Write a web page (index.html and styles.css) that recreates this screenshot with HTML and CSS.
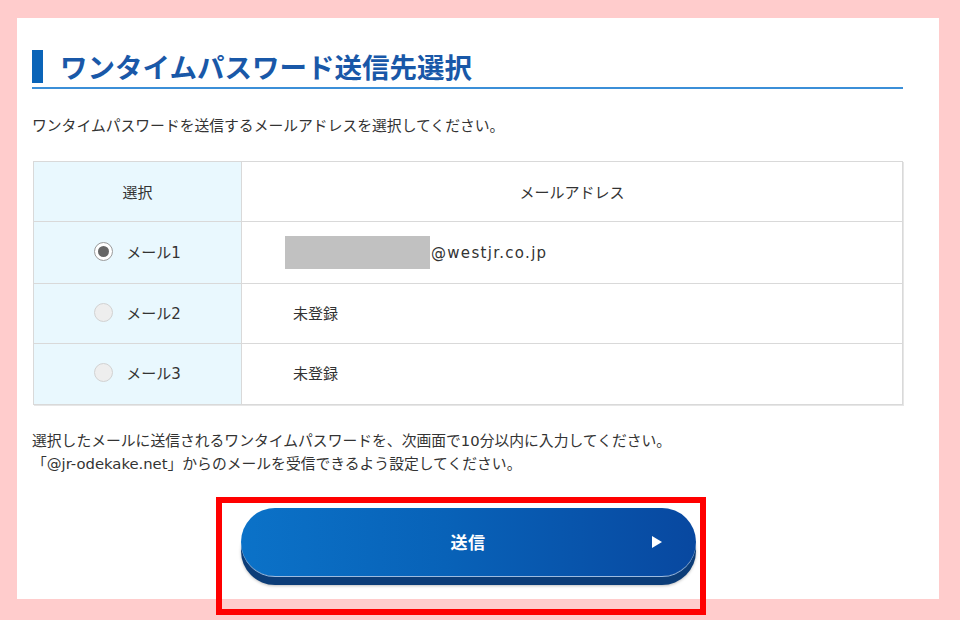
FILE: index.html
```html
<!DOCTYPE html>
<html lang="ja">
<head>
<meta charset="utf-8">
<title>ワンタイムパスワード送信先選択</title>
<link rel="stylesheet" href="styles.css">
</head>
<body>
<div class="panel">
  <h1 class="title"><span class="title-bar"></span>ワンタイムパスワード送信先選択</h1>
  <p class="lead">ワンタイムパスワードを送信するメールアドレスを選択してください。</p>
  <table class="mail-table">
    <tr class="row-head">
      <th class="col-select">選択</th>
      <th class="col-address">メールアドレス</th>
    </tr>
    <tr class="row-1">
      <td class="col-select"><label class="radio-label"><span class="radio checked"></span>メール1</label></td>
      <td class="col-address"><span class="masked"></span><span class="domain">@westjr.co.jp</span></td>
    </tr>
    <tr class="row-2">
      <td class="col-select"><label class="radio-label"><span class="radio"></span>メール2</label></td>
      <td class="col-address"><span class="unreg">未登録</span></td>
    </tr>
    <tr class="row-3">
      <td class="col-select"><label class="radio-label"><span class="radio"></span>メール3</label></td>
      <td class="col-address"><span class="unreg">未登録</span></td>
    </tr>
  </table>
  <p class="notes">選択したメールに送信されるワンタイムパスワードを、次画面で10分以内に入力してください。<br>「@jr-odekake.net」からのメールを受信できるよう設定してください。</p>
  <div class="btn-row">
    <button class="send-btn"><span class="send-label">送信</span><span class="send-arrow"></span></button>
  </div>
</div>
<div class="highlight"></div>
</body>
</html>
```

FILE: styles.css
```css
html, body {
  margin: 0;
  padding: 0;
}
body {
  background: #ffcccc;
  padding: 18px 21px 21px 17px;
  width: 960px;
  height: 620px;
  box-sizing: border-box;
  font-family: "DejaVu Sans", "Noto Sans CJK JP", sans-serif;
  color: #333;
  position: relative;
  overflow: hidden;
}
.panel {
  background: #fff;
  width: 922px;
  height: 581px;
  box-sizing: border-box;
  padding: 31px 36px 0 15px;
}
.title {
  margin: 0;
  display: flex;
  align-items: center;
  gap: 17px;
  height: 34px;
  padding-bottom: 4px;
  font-family: "Noto Sans CJK JP", sans-serif;
  font-size: 27.5px;
  line-height: 34px;
  font-weight: bold;
  color: #1958a8;
  border-bottom: 2px solid #3b8fd8;
}
.title-bar {
  width: 11px;
  height: 33px;
  background: #0a64b8;
  flex: none;
}
.lead {
  margin: 24.5px 0 0 0;
  font-size: 14.8px;
  line-height: 23px;
}
.mail-table {
  margin-top: 24.5px;
  width: 870px;
  margin-left: 1px;
  border-collapse: collapse;
  border: 1px solid #d6d6d6;
  box-shadow: 1px 1px 0 #e6e6e6;
  font-size: 15px;
}
.mail-table th, .mail-table td {
  border: 1px solid #d9d9d9;
  padding: 0;
  font-weight: normal;
  color: #333;
}
.row-head th { height: 59px; }
.row-1 td { height: 61px; }
.row-2 td { height: 59px; }
.row-3 td { height: 60px; }
.mail-table .col-select {
  width: 207px;
  background: #e9f8fe;
  text-align: center;
}
.mail-table th.col-address {
  text-align: center;
}
.mail-table td.col-address {
  text-align: left;
  padding-left: 43px;
}
.radio-label {
  display: inline-flex;
  align-items: center;
  gap: 13px;
}
.radio {
  width: 17px;
  height: 17px;
  border-radius: 50%;
  border: 1px solid #d2d2d2;
  background: #eeeeee;
  position: relative;
  flex: none;
}
.radio.checked {
  background: #fff;
  border-color: #9a9a9a;
}
.radio.checked::after {
  content: "";
  position: absolute;
  left: 3px;
  top: 3px;
  width: 11px;
  height: 11px;
  border-radius: 50%;
  background: #666;
}
.masked {
  display: inline-block;
  width: 145px;
  height: 33px;
  background: #c1c1c1;
  vertical-align: middle;
}
.domain {
  vertical-align: middle;
  margin-left: 1px;
  letter-spacing: 1.3px;
}
.unreg {
  display: inline-block;
  padding-left: 8px;
  margin-top: -3px;
  vertical-align: middle;
}
.notes {
  margin: 23.5px 0 0 0;
  font-size: 14.8px;
  line-height: 23px;
}
.btn-row {
  display: flex;
  justify-content: center;
  margin-top: 33px;
  padding-left: 1px;
}
.send-btn {
  width: 455px;
  height: 68px;
  border: none;
  border-radius: 34px;
  background: linear-gradient(to right, #0b72c8 0%, #0862b8 45%, #0848a0 100%);
  box-shadow: 0 1px 0 #9cbbe0, 0 9px 0 #0c3d78, 0 10px 3px rgba(0, 0, 0, 0.25);
  position: relative;
  display: flex;
  align-items: center;
  justify-content: center;
  padding: 0;
  font-family: "Noto Sans CJK JP", sans-serif;
  cursor: pointer;
}
.send-label {
  color: #fff;
  font-weight: bold;
  font-size: 17px;
  letter-spacing: 0.5px;
  margin-top: -1px;
}
.send-arrow {
  position: absolute;
  right: 34px;
  top: 50%;
  margin-top: -6px;
  width: 0;
  height: 0;
  border-top: 6px solid transparent;
  border-bottom: 6px solid transparent;
  border-left: 10px solid #fff;
}
.highlight {
  position: absolute;
  left: 216px;
  top: 497px;
  width: 490px;
  height: 118px;
  box-sizing: border-box;
  border: 6px solid #ff0000;
}
```
